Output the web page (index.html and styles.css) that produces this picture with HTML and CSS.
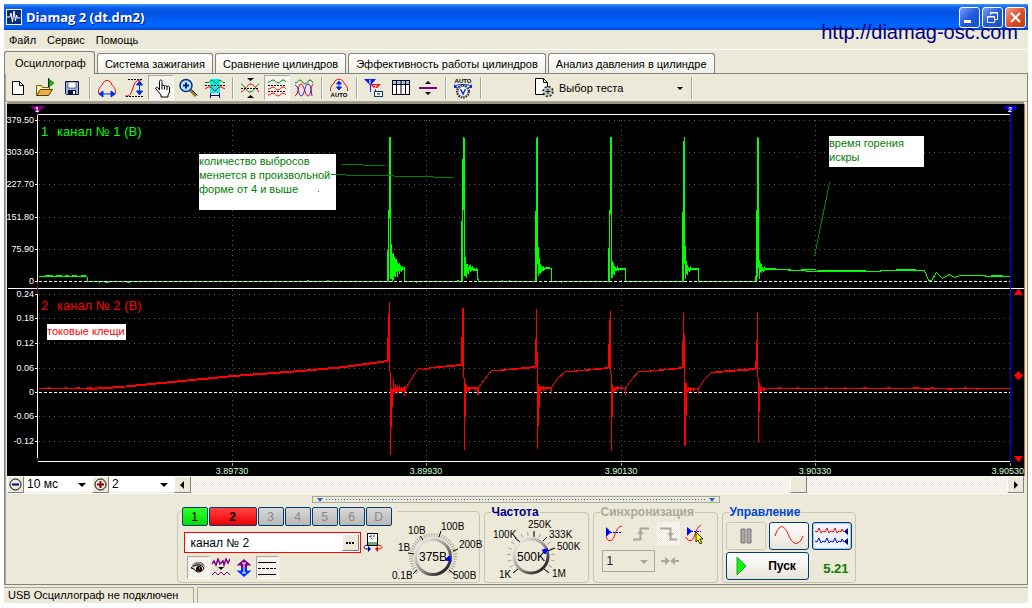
FILE: index.html
```html
<!DOCTYPE html>
<html lang="ru">
<head>
<meta charset="utf-8">
<title>Diamag 2 (dt.dm2)</title>
<link rel="stylesheet" href="styles.css">
</head>
<body>
<div class="window">
  <header class="titlebar">
    <svg class="app-icon" width="16" height="16" viewBox="0 0 16 16"><rect width="16" height="16" fill="#fff"/><rect x="1" y="1" width="14" height="14" fill="#0a2a7a"/><path d="M1 8h3l1-4 1.500 9 1.500-11 1.500 10 1-6 1 3h3" fill="none" stroke="#fff"/></svg>
    <h1 class="title">Diamag 2 (dt.dm2)</h1>
    <div class="window-buttons">
      <button class="wbtn" aria-label="Свернуть"><svg width="19" height="19" viewBox="0 0 19 19"><path d="M4 12h7v3H4z" fill="#fff"/></svg></button>
      <button class="wbtn" aria-label="Восстановить"><svg width="19" height="19" viewBox="0 0 19 19" fill="none" stroke="#fff"><path d="M7.500 7V4.500h7v7H12M7 5h8M4.500 8.500h7v6h-7zM4 9h8"/></svg></button>
      <button class="wbtn wbtn-close" aria-label="Закрыть"><svg width="19" height="19" viewBox="0 0 19 19"><path d="M5 5l9 9M14 5l-9 9" stroke="#fff" stroke-width="2"/></svg></button>
    </div>
  </header>
  <a class="site" href="#">http://diamag-osc.com</a>
  <nav class="menu">
    <button>Файл</button><button>Сервис</button><button>Помощь</button>
  </nav>
  <div class="tabs" role="tablist">
    <button class="tab tab-active" role="tab" aria-selected="true">Осциллограф</button>
    <button class="tab" role="tab">Система зажигания</button>
    <button class="tab" role="tab">Сравнение цилиндров</button>
    <button class="tab" role="tab">Эффективность работы цилиндров</button>
    <button class="tab" role="tab">Анализ давления в цилиндре</button>
  </div>
  <main class="page">
    <div class="toolbar">
      <button class="tool" aria-label="Новый"><svg width="20" height="20" viewBox="0 0 20 20"><path d="M4.500 3.500h7l4 4v9h-11zM11.500 3.500v4h4" fill="#fff" stroke="#000"/></svg></button>
      <button class="tool" aria-label="Открыть"><svg width="20" height="20" viewBox="0 0 20 20"><path d="M1.500 17V7.500h5l1 2h7V12" fill="#fff4b0" stroke="#7a5a10"/><path d="M1.500 17.500l4-6h12l-4 6z" fill="#e8b040" stroke="#5a3c00"/><path d="M13.500 0v9" stroke="#000"/><path d="M14 1l5 4-5 4z" fill="#00c000" stroke="#006000" stroke-width=".6"/></svg></button>
      <button class="tool" aria-label="Сохранить"><svg width="20" height="20" viewBox="0 0 20 20"><path d="M3.500 3.500h13v13h-12l-1-1z" fill="#9ab0e8" stroke="#101030"/><path d="M6 4h8v6H6z" fill="#fff" stroke="#223" stroke-width=".6"/><path d="M6 12h8v4H6z" fill="#101030"/><path d="M11 13h2v3h-2z" fill="#fff"/></svg></button>
      <span class="sep"></span>
      <button class="tool" aria-label="Масштаб по времени"><svg width="20" height="20" viewBox="0 0 20 20" fill="none"><path d="M1.500 16C1 11 3 9 5 7 7 1 13 1 15 7c2 2 4 4 3.500 9" stroke="red"/><path d="M3 16h14M6 13l-4 3 4 3zM14 13l4 3-4 3z" stroke="#0030e0" fill="#0030e0"/></svg></button>
      <button class="tool" aria-label="Масштаб по уровню"><svg width="20" height="20" viewBox="0 0 20 20" fill="none"><path d="M1 18h3c4-1 4-8 7-13 1-2 3-3 6-3" stroke="red"/><path d="M4 1.500h15M2 18.500h17" stroke="#000" stroke-dasharray="2 1"/><path d="M15.500 4v13M12.500 7l3-4 3 4zM12.500 13l3 4 3-4z" stroke="#0030e0" fill="#0030e0"/></svg></button>
      <button class="tool tool-on" aria-label="Рука"><svg width="20" height="20" viewBox="0 0 20 20"><path d="M8.500 12V3.500c0-2 2.500-2 2.500 0V8c0-1.500 2.500-1 2.500.5 0-1.500 2.500-1 2.500.5 0-1.300 2.500-1 2.500.8V14l-1.500 3v2h-7v-2l-5-6c-.8-1.600 1-2.300 2-1z" fill="#fff" stroke="#000"/><path d="M11 8v3.500M13.500 8.500v3M16 9v3" stroke="#000"/></svg></button>
      <button class="tool" aria-label="Лупа"><svg width="20" height="20" viewBox="0 0 20 20"><path d="M12 12l6 6" stroke="#a07830" stroke-width="3"/><path d="M13.500 11.500l6 6" stroke="#222"/><circle cx="8" cy="7.500" r="6" fill="#b8e0ff" stroke="#003080" stroke-width="1.500"/><path d="M8 4.500v6M5 7.500h6" stroke="#0020a0" stroke-width="2"/></svg></button>
      <button class="tool" aria-label="Интервал"><svg width="20" height="20" viewBox="0 0 20 20" fill="none"><path d="M5 1h10v14H5z" fill="#00f0f0"/><path d="M0 4.500h4l2-2h2l3 3 3-3h2l2 2h2" stroke="#008000"/><path d="M0 7.500h20" stroke="#000" stroke-dasharray="2 1"/><path d="M0 11l3-2h3l4 4 4-4h2l4 2" stroke="red"/><path d="M5 17.500h9M5.500 15v5M14.500 15v5" stroke="#0000a0"/></svg></button>
      <span class="sep"></span>
      <button class="tool" aria-label="Совместить"><svg width="20" height="20" viewBox="0 0 20 20" fill="none"><path d="M7 0h7l-3.500 3zM7 20h7l-3.500-3z" fill="#000"/><path d="M1 14c4-1 6-8 10-8 4 1 5 5 8 8" stroke="red"/><path d="M1 6c4 1 5 8 9 8s6-7 9-8" stroke="#008000"/><path d="M1 10.500h18" stroke="#000" stroke-dasharray="2 1"/></svg></button>
      <button class="tool tool-on" aria-label="Разделить"><svg width="20" height="20" viewBox="0 0 20 20" fill="none"><path d="M1 4c3 0 3-2 5-2s3 3 5 3 3-3 5-3 2 1 3 2" stroke="#008000"/><path d="M1 7.500h18M1 13.500h18" stroke="#000" stroke-dasharray="2 1"/><path d="M1 11c3 0 3-2 5-2s3 3 5 3 3-3 5-3 2 1 3 2M1 17c3 0 3-2 5-2s3 3 5 3 3-3 5-3 2 1 3 2" stroke="red"/></svg></button>
      <button class="tool" aria-label="Наложить"><svg width="20" height="20" viewBox="0 0 20 20" fill="none"><path d="M1 5c3 0 3-3 5-3s3 4 5 4 3-4 5-4 2 2 3 3" stroke="#008000"/><path d="M1 18C5 16 4 6 7 6s4 12 7 12 2-8 5-12" stroke="red"/><path d="M1 7c4 1 3 10 6 11 4 0 3-11 7-12 3 0 3 7 4 12" stroke="#2020f0"/></svg></button>
      <span class="sep"></span>
      <button class="tool" aria-label="Авто"><svg width="20" height="20" viewBox="0 0 20 20"><path d="M1.500 13C1 9 3 7 5 5 7 0 13 0 15 5c2 2 4 4 3.500 8" fill="none" stroke="red"/><path d="M10 4v7M7.500 6L10 3l2.500 3zM7.500 9l2.500 3 2.500-3z" stroke="#0030e0" fill="#0030e0"/><text class="pix" x="10" y="19" text-anchor="middle">AUTO</text></svg></button>
      <span class="sep"></span>
      <button class="tool" aria-label="Маркеры"><svg width="20" height="20" viewBox="0 0 20 20"><path d="M0 1h12L7 7v7H6V7z" fill="#0020f0"/><path d="M6 6h11l-5 5v8h-1v-8z" fill="#f01010"/><path d="M5 2.500l1-.5v4M9.500 7.500h3l-2 3h3" stroke="#fff" fill="none"/><rect x="10.500" y="13.500" width="8" height="5" fill="#fff" stroke="#003c74"/><path d="M13 16h3" stroke="#000"/></svg></button>
      <button class="tool" aria-label="Таблица"><svg width="20" height="20" viewBox="0 0 20 20"><rect x="1.500" y="2.500" width="17" height="14" fill="#fff" stroke="#000"/><path d="M2 3h16v3H2z" fill="#90c8f8"/><path d="M2 6.500h16M5.500 3v13M10 3v13M14.500 3v13" stroke="#000"/></svg></button>
      <button class="tool" aria-label="Линия"><svg width="20" height="20" viewBox="0 0 20 20"><path d="M1 9h18v2H1z" fill="#800080"/><path d="M7 6h6l-3-3zM7 14h6l-3 3z"/></svg></button>
      <span class="sep"></span>
      <button class="tool" aria-label="Автонастройка"><svg width="20" height="22" viewBox="0 0 20 22"><text class="pix" x="10" y="6" text-anchor="middle">AUTO</text><circle cx="10" cy="14.500" r="6" fill="#fff" stroke="#222" stroke-width="2" stroke-dasharray="1.500 1"/><circle cx="10" cy="14.500" r="5" fill="#fff" stroke="#777"/><path d="M7.500 12l2.500 5 2.500-5" fill="none" stroke="#0030f0" stroke-width="1.500"/><path d="M2 9c3-2 13-2 16 0" fill="none" stroke="#0030e0"/><path d="M1 7v4h4zM19 7v4h-4z" fill="#0030e0"/></svg></button>
      <span class="sep"></span>
      <label class="test-pick">
        <svg width="20" height="20" viewBox="0 0 20 20"><path d="M1.500.5h8l4 4v12h-12zM9.500.5v4h4" fill="#fff" stroke="#000"/><circle cx="14" cy="13.500" r="4.500" fill="#b8c8b8" stroke="#333" stroke-width="2.500" stroke-dasharray="2 1.500"/><circle cx="14" cy="13.500" r="4" fill="#b8c8b8"/><path d="M14 11v5M11.500 13.500h5" stroke="#222"/></svg>
        <span class="pick pick-flat"><select aria-label="Тест"><option>Выбор теста</option></select></span>
      </label>
      <span class="sep"></span>
    </div>

    <svg class="scope" viewBox="7 104 1017 372" role="img" aria-label="Осциллограмма">
      <rect x="7" y="104" width="1017" height="372"/>
      <g transform="translate(.5 .5)" fill="none" shape-rendering="crispEdges">
        <path class="grid" d="M38 120H1010M38 152H1010M38 184H1010M38 217H1010M38 249H1010M38 294H1010M38 318H1010M38 343H1010M38 368H1010M38 416H1010M38 441H1010"/>
        <path class="grid" d="M232 119V460M426 119V460M621 119V460M815 119V460"/>
        <path stroke="#fff" d="M37 114H1010M7 288H1024M37 461H1010M37 114V461"/>
        <path stroke="#fff" d="M34 120h3M34 152h3M34 184h3M34 217h3M34 249h3M34 281h3M34 294h3M34 318h3M34 343h3M34 368h3M34 392h3M34 416h3M34 441h3"/>
        <path stroke="#999" d="M232 462v3M426 462v3M621 462v3M815 462v3M1010 462v3"/>
        <path stroke="#800080" d="M37 106V114M37 281V293M37 457V461"/>
        <path stroke="#0f0" d="M38 276H86M44 275h8M55 275h6M64 275h4M71 275h5M80 275h5M87 276V281M87 281H387M98 282h1M104 282h4M126 282h3M306 280h2M326 280h2
          M387 249V281M388 209V281M389 136V217M390 136V278M391 243V278M392 253V281M393 252V279M394 256V275M395 258V276M396 258V271M397 261V276M398 263V270M399 262V273M400 264V270M401 266V271M402 265V269M403 267V269M404 266V281
          M404 281H461M415 282h1M456 280h2M461 220V281M462 158V281M463 136V209M464 137V275M465 256V275M466 263V277M467 263V272M468 266V273M469 264V269M470 264V271M471 266V270M472 265V269M473 267V270M474 267V270M475 268V270M476 267V270M477 268V279M478 278V281
          M478 281H535M501 280h1M508 280h1M535 210V281M536 137V281M537 136V263M538 246V275M539 257V272M540 263V273M541 265V271M542 266V270M543 265V270M544 267V269M541 268H551M544 267H549M551 268V281
          M551 281H608M560 282h1M608 247V281M609 209V281M610 136V213M611 136V277M612 260V277M613 262V273M614 265V274M615 266V270M616 267V270M617 265V269M618 267V270M614 268H625M618 269H625M625 268V281
          M625 281H682M682 211V281M683 140V281M684 136V263M685 245V278M686 260V273M687 264V274M688 266V270M689 267V271M690 265V270M691 267V269M688 268H698M688 269H698M698 268V281
          M698 281H755M755 275V281M756 209V281M757 136V276M758 137V267M759 259V278M760 262V271M761 263V272M762 266V270M763 267V271M764 265V270M765 267V269M762 268H775M762 269H790"/>
        <path stroke="#0f0" d="M780 269H788V270H806V271H840V271H880V270H924L928 280L931 280L936 272L942 278L949 274L954 277L960 275H985V276H1010M800 269h15M816 270h20M830 270H865M895 269H915M970 275h14M990 275h12"/>
        <path stroke="#fff" stroke-dasharray="3 2" d="M38 281H1010M38 392H1010"/>
        <path stroke="#f00" d="M38 388H86M46 387h3M64 387h2M75 387h4M86 387h5M86 389h2M86 388L120 386L233 375L300 370L344 366L387 360M90 389L120 387L233 376L300 371L344 367L387 361
          M387 337V361M388 313V360M389 301V371M390 371V454M391 387V426M392 388V406M393 378V391M394 388V393M395 383V392M396 386V391M397 385V392M398 387V390M399 384V391M400 387V391M401 386V390M402 387V391M403 386V390M392 388H405M404 385V395M405 386V391M405 388L410 380L418 368L424 369L430 367L461 364M424 368L461 365
          M461 336V365M462 307V365M463 307V377M464 377V449M465 382V416M466 384V391M467 386V390M468 388V391M469 386V390M466 387H478M466 388H478M475 386V390M477 388V394M478 387V394M478 387L484 379L491 370L496 370L535 366M500 370L535 367
          M535 338V366M536 308V366M537 351V448M538 383V425M539 385V406M540 386V392M541 385V389M543 385V390M540 387H551M540 388H551M545 387V390M551 387V393M551 387L557 378L565 371L570 371L608 367M572 371L608 368
          M608 343V367M609 319V367M610 310V373M611 373V450M612 383V416M613 386V391M614 387V391M615 386V390M617 385V390M612 388H625M614 387H622M625 386V394M625 388L631 379L638 371L645 371L682 367M645 371L682 368
          M682 340V367M683 311V367M684 333V445M685 382V445M686 382V414M687 387V392M688 386V391M690 386V391M687 388H698M688 389H694M693 387V390M698 387V393M698 388L704 379L711 372L718 371L755 368M715 372L755 369
          M755 360V368M756 340V368M757 311V377M758 377V441M759 382V411M760 386V391M761 385V391M763 386V390M764 387V390M760 388H1010M777 387h3M796 387h2M824 387h2M843 387h2M862 387h4M886 387h3M912 387h6M923 389h6M930 387h3M946 389h5M963 387h3M975 389h2"/>
        <path stroke="#008000" d="M340 164H362M362 165H384M335 174H345M345 175H353M353 175H393M393 176H433M433 177H453M829 182L814 256M318 190h1M795 156h1"/>
        <path stroke="#00f" d="M1010 106V461"/>
      </g>
      <path fill="#800080" d="M30 106h15l-7 7z"/>
      <path fill="#00f" d="M1003 106h15l-7 7z"/>
      <path fill="#f00" d="M1014 295l4-6h1l4 6zM1014 456h9l-4 6h-1zM1014 375.500l4.500-4.500 4.500 4.500-4.500 4.500z"/>
      <text class="mark" x="37" y="112" text-anchor="middle">1</text>
      <text class="mark" x="1010" y="112" text-anchor="middle">2</text>
      <g class="axis" text-anchor="end">
        <text x="34" y="123">379.50</text><text x="34" y="155">303.60</text><text x="34" y="187">227.70</text><text x="34" y="220">151.80</text><text x="34" y="252">75.90</text><text x="34" y="284">0</text>
        <text x="34" y="297">0.24</text><text x="34" y="321">0.18</text><text x="34" y="346">0.12</text><text x="34" y="371">0.06</text><text x="34" y="395">0</text><text x="34" y="419">-0.06</text><text x="34" y="444">-0.12</text>
      </g>
      <g class="time" text-anchor="middle">
        <text x="232" y="474">3.89730</text><text x="426" y="474">3.89930</text><text x="621" y="474">3.90130</text><text x="815" y="474">3.90330</text><text x="1024" y="474" text-anchor="end">3.90530</text>
      </g>
      <g class="channel" fill="#0f0"><text x="41" y="136">1</text><text x="57" y="136">канал № 1 (В)</text></g>
      <g class="channel" fill="#f00"><text x="41" y="310">2</text><text x="57" y="310">канал № 2 (В)</text></g>
      <path fill="#fff" d="M199 154h137v56H199zM829 136h95v31h-95zM47 324h79v16H47z"/>
      <path stroke="#008000" d="M331 174.500h5M318 191.500h1"/>
      <g class="note" fill="#008000"><text x="199" y="165">количество выбросов</text><text x="199" y="179">меняется в произвольной</text><text x="199" y="193">форме от 4 и выше</text><text x="829" y="147">время горения</text><text x="829" y="161">искры</text></g>
      <g class="note" fill="#f00"><text x="47" y="335">токовые клещи</text></g>
    </svg>

    <div class="scroll-row">
      <button class="mini" aria-label="Уменьшить"><svg width="13" height="13" viewBox="0 0 13 13"><circle cx="6.500" cy="6.500" r="5.500" fill="none" stroke="#000"/><path d="M3 5.500h7v2H3z" fill="#000090"/></svg></button>
      <span class="pick pick-scale"><select aria-label="Развёртка"><option>10 мс</option></select></span>
      <button class="mini" aria-label="Увеличить"><svg width="13" height="13" viewBox="0 0 13 13"><circle cx="6.500" cy="6.500" r="5.500" fill="none" stroke="#000"/><path d="M3 5.500h7v2H3zM5.500 3h2v7h-2z" fill="#900000"/></svg></button>
      <span class="pick pick-zoom"><select aria-label="Масштаб"><option>2</option></select></span>
      <button class="mini" aria-label="Влево"><svg width="9" height="9" viewBox="0 0 9 9"><path d="M6 1v8L2 5z"/></svg></button>
      <input class="scroll" type="range" min="0" max="1000" value="750" aria-label="Прокрутка">
      <button class="mini" aria-label="Вправо"><svg width="9" height="9" viewBox="0 0 9 9"><path d="M3 1v8l4-4z"/></svg></button>
    </div>

    <div class="splitter"><i class="tri"></i><span class="dots"></span><i class="tri"></i></div>

    <div class="panel">
      <fieldset class="group group-channel">
        <div class="left">
          <div class="channels">
            <button class="ch ch-green">1</button><button class="ch ch-red">2</button><button class="ch" disabled>3</button><button class="ch" disabled>4</button><button class="ch" disabled>5</button><button class="ch" disabled>6</button><button class="ch" disabled>D</button>
          </div>
          <div class="name-row">
            <div class="name-box"><input type="text" value="канал № 2" aria-label="Имя канала"><button class="more" aria-label="Выбрать"><svg width="9" height="4" viewBox="0 0 9 4"><path d="M0 1h2v2H0zM3 1h2v2H3zM6 1h2v2H6z"/></svg></button></div>
            <button class="plain" aria-label="Датчик"><svg width="20" height="20" viewBox="0 0 20 20"><rect x="4.500" y=".5" width="10" height="12" fill="#fff" stroke="#000"/><path d="M5 9h9v3H5z" fill="#70a870"/><path d="M6 3l4 4M7 3h6" stroke="#333" stroke-dasharray="2 1" fill="none"/><path d="M4 12c-4 1-4 4 0 4h2" fill="none" stroke="#000090"/><path d="M5 13v6l3-3z" fill="#000090"/><path d="M15 12c6 1 5 4 1 4h-2" fill="none" stroke="red"/><path d="M15 13v6l-3-3z" fill="red"/></svg></button>
          </div>
          <div class="view-row">
            <button class="tool2 tool-on" aria-label="Показать"><svg width="18" height="18" viewBox="0 0 18 18"><path d="M3 6c3-4 9-4 12-1l1 3c-4-2-8-2-11 1z" fill="#888"/><path d="M2 9c4-4 10-4 13 0-2 5-8 5-10 1z" fill="#f4d8c8" stroke="#000"/><circle cx="10" cy="10" r="3"/><path d="M8 12h2" stroke="red"/><path d="M10 9h1" stroke="#fff"/></svg></button>
            <button class="tool2" aria-label="Фильтр"><svg width="18" height="20" viewBox="0 0 18 20"><path d="M0 6l2-3 2 4 2-6 2 5 3-3 1 4 2-6 2 4 2-4" fill="none" stroke="#800080" stroke-width="1.500"/><path d="M6 9h6l-3 3z"/><path d="M0 17l3-3 3 3 3-3 3 3 3-3 3 3" fill="none" stroke="#800080"/></svg></button>
            <button class="tool2" aria-label="Сдвиг"><svg width="18" height="20" viewBox="0 0 18 20"><path d="M1.500 7.500L9 1l7.500 6.500H12V10H6V7.500z" fill="#800080"/><path d="M1.500 12.500L9 19l7.500-6.500H12V10H6v2.500z" fill="#0030ff"/><path d="M9 5v10M7 5h4M7 15h4" stroke="#fff"/></svg></button>
            <button class="tool2 tool-on" aria-label="Линии"><svg width="20" height="18" viewBox="0 0 20 18" stroke="#000"><path d="M1 3.500h18M1 15.500h18"/><path d="M1 9.500h18" stroke-dasharray="3 1"/></svg></button>
          </div>
        </div>
        <svg class="dial" width="96" height="66" viewBox="384 517 96 66" role="img" aria-label="Диапазон 375В">
          <defs><linearGradient id="ring" x1="0" y1="0" x2="1" y2="1"><stop offset="0" stop-color="#fff"/><stop offset=".5" stop-color="#999"/><stop offset="1" stop-color="#000"/></linearGradient></defs>
          <path d="M412.500 572.500a22 22 0 1 1 31 0" fill="none" stroke="#aaa79a" stroke-width="4" stroke-dasharray="1 1.500"/>
          <circle cx="428" cy="557" r="17.500" fill="#ece9d8" stroke="url(#ring)" stroke-width="3"/>
          <path d="M412 570l-4 4M409 554l-6-1M418 540l-3-4M434 537l2-6M448 551l5-2M444 570l5 4" stroke="#000"/>
          <path d="M440 560l4-4 2 5z" fill="#00f" stroke="#00f"/>
          <g class="ticks"><text x="387" y="579">0.1В</text><text x="393" y="551">1В</text><text x="403" y="534">10В</text><text x="436" y="530">100В</text><text x="454" y="548">200В</text><text x="448" y="579">500В</text></g>
          <text class="val" x="428" y="561" text-anchor="middle">375В</text>
        </svg>
      </fieldset>

      <fieldset class="group group-freq">
        <legend class="navy">Частота</legend>
        <svg class="dial" width="102" height="64" viewBox="485 519 102 64" role="img" aria-label="Частота 500K">
          <path d="M515.500 571.500a22 22 0 1 1 31 0" fill="none" stroke="#aaa79a" stroke-width="4" stroke-dasharray="1 5"/>
          <circle cx="531" cy="556" r="17" fill="#ece9d8" stroke="url(#ring)" stroke-width="3"/>
          <path d="M518 569l-5 4M520 542l-5-4M534 537v-6M543 541l4-4M548 551l7-3M544 569l5 4" stroke="#000"/>
          <path d="M542 550l6-1-3 5z" fill="#00f" stroke="#00f"/>
          <g class="ticks"><text x="499" y="578">1K</text><text x="493" y="538">100K</text><text x="528" y="528">250K</text><text x="549" y="538">333K</text><text x="557" y="550">500K</text><text x="552" y="577">1M</text></g>
          <text class="val" x="531" y="561" text-anchor="middle">500K</text>
        </svg>
      </fieldset>

      <fieldset class="group group-sync">
        <legend class="muted">Синхронизация</legend>
        <div class="sync-row">
          <button class="tool2" aria-label="Уровень"><svg width="20" height="20" viewBox="0 0 20 20"><path d="M2 13c2 5 6 5 8 0s3-10 8-11" fill="none" stroke="red"/><path d="M2 3v10l5-5z" fill="#00f"/><path d="M6 8.500h12" stroke="#00f" stroke-dasharray="2 1"/></svg></button>
          <button class="tool2" disabled aria-label="Фронт"><svg width="20" height="20" viewBox="0 0 20 20"><path d="M2 15.500h7.500v-11H18" fill="none" stroke="#aca899" stroke-width="2"/><path d="M6 10h7l-3.500-4z" fill="#aca899"/></svg></button>
          <button class="tool2 check" disabled aria-label="Спад"><svg width="20" height="20" viewBox="0 0 20 20"><path d="M2 4.500h10.500v11H19" fill="none" stroke="#aca899" stroke-width="2"/><path d="M9 9h7l-3.500 4z" fill="#aca899"/></svg></button>
          <button class="tool2" aria-label="Выбор уровня"><svg width="20" height="20" viewBox="0 0 20 20"><path d="M1 13c2 5 6 5 8 0s3-10 7-12" fill="none" stroke="red"/><path d="M2 3v9l5-5z" fill="#00f"/><path d="M6 7.500h10" stroke="#00f" stroke-dasharray="2 1"/><path d="M11 8v10l2-2 2 4 2-1-2-4h3z" fill="#ff0" stroke="#000" stroke-width=".8"/></svg></button>
        </div>
        <div class="sync-row">
          <span class="pick pick-sync"><select disabled aria-label="Канал синхронизации"><option>1</option></select></span>
          <svg width="20" height="12" viewBox="0 0 20 12"><path d="M1 5h4V2l5 4-5 4V7H1zM19 5h-4V2l-5 4 5 4V7h4z" fill="#aca899"/></svg>
        </div>
      </fieldset>

      <fieldset class="group group-run">
        <legend class="blue">Управление</legend>
        <div class="run-grid">
          <button class="big big-off" disabled aria-label="Пауза"><svg width="12" height="16" viewBox="0 0 12 16"><path d="M1 1h4v14H1zM7 1h4v14H7z" fill="#aaa" stroke="#777"/></svg></button>
          <button class="big" aria-label="Синус"><svg width="30" height="20" viewBox="0 0 30 20"><path d="M1 10C5-2 10-2 14 8s10 14 15 2" fill="none" stroke="red"/></svg></button>
          <button class="big big-blue" aria-label="Два канала"><svg width="34" height="20" viewBox="0 0 34 20"><path d="M0 5l2 1 2-4 2 5 2-2 2 1 2-4 2 5 2-2 2 1 2-4 2 5 2-2 2 1 1-3 2 3" fill="none" stroke="red"/><path d="M0 15l2 1 2-4 2 5 2-2 2 1 2-4 2 5 2-2 2 1 2-4 2 5 2-2 2 1 1-3 2 3" fill="none" stroke="#00f"/><path d="M33 2v7l-4-3.500zM33 12v7l-4-3.500z" fill="#000080"/></svg></button>
          <button class="big start"><svg width="12" height="20" viewBox="0 0 12 20"><path d="M1 1v18l9-9z" fill="#0f0" stroke="#393"/></svg><span>Пуск</span></button>
          <output class="reading">5.21</output>
        </div>
      </fieldset>
    </div>
  </main>
  <footer class="status">
    <span class="cell">USB Осциллограф не подключен</span><span class="cell cell-rest"></span>
  </footer>
</div>
</body>
</html>
```
FILE: styles.css
```css
* { box-sizing: border-box; }
body { margin: 0; padding: 4px; background: #fff; color: #000; font: 11px/14px "Liberation Sans", Arial, sans-serif; }
button, input, select { font: inherit; color: inherit; margin: 0; padding: 0; border: 0; background: none; border-radius: 0; }
svg { display: block; flex: none; }
.window { position: relative; background: #ece9d8; }

.titlebar { display: flex; align-items: center; height: 26px; padding: 0 2px; background: linear-gradient(#3d95ff 0, #0a5be6 4px, #0053e1 9px, #0061fc 18px, #0066ff 22px, #0045c8 26px); }
.title { margin: 0 0 0 4px; color: #fff; font: bold 13px/18px "Open Sans", "Noto Sans", sans-serif; text-shadow: 1px 1px #0a1883; flex: 1; }
.window-buttons { display: flex; gap: 2px; }
.wbtn { width: 21px; height: 21px; border: 1px solid #fff; border-radius: 3px; background: linear-gradient(135deg, #7f9ff0, #2459dc 50%, #1a4fc8); }
.wbtn-close { background: linear-gradient(135deg, #f0a088, #e0502c 50%, #c03a10); }
.site { position: absolute; top: 16px; right: 10px; color: #000080; font-size: 20px; line-height: 24px; text-decoration: none; }

.menu { display: flex; gap: 11px; height: 20px; padding: 0 5px; border-bottom: 1px solid #fff; }
.tabs { display: flex; align-items: flex-end; gap: 2px; height: 23px; }
.tab { height: 20px; padding: 0 7px; border: 1px solid #808080; border-bottom: 0; border-radius: 3px 3px 0 0; background: linear-gradient(#fff, #f0efe6); white-space: nowrap; }
.tab-active { height: 23px; margin-bottom: -1px; padding: 0 8px 0 10px; position: relative; z-index: 1; background: #ece9d8; }

.page { border: 1px solid #808080; box-shadow: inset 1px 0 #aca899; }
.toolbar { display: flex; align-items: center; gap: 1px; height: 28px; border-bottom: 1px solid #aca899; box-shadow: 0 1px #fff; }
.tool { display: grid; place-items: center; width: 26px; height: 25px; }
.tool-on { border: 1px solid; border-color: #aca899 #fff #fff #aca899; background: repeating-conic-gradient(#fff 0 25%, #ece9d8 0 50%) 0 0 / 2px 2px; }
.sep { width: 7px; height: 22px; background: linear-gradient(90deg, transparent 3px, #aca899 3px 4px, #fff 4px 5px, transparent 5px); }
.pix { font: bold 6px "Liberation Sans", sans-serif; }
.test-pick { display: flex; align-items: center; gap: 5px; width: 202px; padding-left: 49px; }
.pick { position: relative; display: block; }
.pick select { width: 100%; height: 100%; appearance: none; opacity: 1; }
.pick::after { content: ""; position: absolute; right: 6px; top: 50%; margin-top: -1px; border: solid transparent; border-width: 4px 4px 0; border-top-color: #000; pointer-events: none; }
.pick-flat { flex: 1; }
.test-pick .pick::after { right: 4px; border-width: 3px 3px 0; }

.scope { width: calc(100% - 5px); margin: 2px 3px 0 2px; box-shadow: 0 -2px #999588, 1px 0 #b07838; }
.grid { stroke: #5a5a5a; stroke-dasharray: 1 4; }
.axis, .time { font-size: 9px; fill: #fff; }
.time { fill: #d0ffd0; }
.mark { font: bold 7px "Liberation Sans", sans-serif; fill: #fff; }
.channel { font-size: 13px; }
.note { font-size: 11px; }

.scroll-row { display: flex; height: 18px; margin: 0 3px 0 2px; padding-bottom: 1px; border-bottom: 1px solid #fff; }
.mini { display: grid; place-items: center; width: 17px; height: 17px; background: #ece9d8; border: 1px solid; border-color: #fff #808080 #808080 #fff; }
.scroll-row .pick { background: #fff; }
.scroll-row select { padding-left: 3px; font-size: 12px; }
.pick-scale { width: 68px; }
.pick-zoom { width: 65px; }
.scroll { flex: 1; min-width: 0; appearance: none; height: 17px; background: repeating-conic-gradient(#fff 0 25%, #ece9d8 0 50%) 0 0 / 2px 2px; }
.scroll::-webkit-slider-thumb { appearance: none; width: 17px; height: 17px; background: #ece9d8; border: 1px solid; border-color: #fff #808080 #808080 #fff; }

.splitter { display: flex; align-items: center; gap: 3px; width: 408px; height: 7px; margin: 2px auto 0; padding: 0 4px; border: 1px solid #aca899; }
.tri { border: solid transparent; border-width: 4px 3px 0; border-top-color: #316ac5; }
.dots { flex: 1; height: 1px; background: repeating-linear-gradient(90deg, #316ac5 0 1px, transparent 1px 3px); }

.panel { display: flex; justify-content: center; align-items: flex-end; gap: 4px; height: 81px; padding-bottom: 1px; }
.group { margin: 0; padding: 0; min-width: 0; height: 78px; border: 1px solid #c8c5b4; border-radius: 4px; }
.group legend { margin-left: 6px; padding: 0 1px; font-weight: bold; font-size: 12px; line-height: 14px; }
.navy { color: #000080; }
.muted { color: #aca899; }
.blue { color: #0046d5; }
.group-channel { display: flex; width: 303px; height: 72px; }
.group-freq { width: 105px; }
.group-sync { width: 125px; }
.group-run { width: 134px; }
.left { display: flex; flex-direction: column; flex: 1; }
.channels { display: flex; gap: 1px; margin: -5px 0 6px 3px; padding: 0 5px 0 1px; align-self: flex-start; background: #ece9d8; }
.ch { width: 26px; height: 19px; border: 1px solid #003c74; border-radius: 2px; background: linear-gradient(#d8d8d8, #b8b8b8); font-size: 12px; color: #888; }
.ch-green { background: linear-gradient(#3f3, #0d0); color: #000; }
.ch-red { width: 48px; background: linear-gradient(#f44, #e00); color: #000; font-weight: bold; }
.name-row { display: flex; gap: 2px; padding-left: 6px; }
.name-box { display: flex; width: 177px; height: 21px; padding: 1px; border: 1px solid #f00; background: #fff; }
.name-box input { flex: 1; min-width: 0; padding-left: 5px; font-size: 12px; outline: 0; }
.more { display: grid; place-items: center; width: 17px; background: #ece9d8; border: 1px solid; border-color: #fff #808080 #808080 #fff; }
.view-row { display: flex; padding: 3px 0 0 9px; }
.tool2 { display: grid; place-items: center; width: 23px; height: 23px; }
.group-channel .dial { margin: 5px 0 0 -8px; }
.ticks { font-size: 10px; }
.val { font-size: 12px; }
.sync-row { display: flex; align-items: center; gap: 4px; padding: 3px 0 0 9px; }
.sync-row + .sync-row { padding-top: 5px; gap: 5px; padding-left: 8px; }
.check { background: repeating-conic-gradient(#fff 0 25%, #ece9d8 0 50%) 0 0 / 2px 2px; }
.pick-sync { width: 53px; height: 22px; border: 1px solid #aca899; }
.pick-sync select { padding-left: 4px; font-size: 12px; color: #222; }
.pick-sync::after { border-top-color: #aca899; }
.run-grid { display: grid; grid-template-columns: 40px 40px 40px; gap: 2px 3px; padding: 3px 0 0 3px; }
.big { display: grid; place-items: center; height: 28px; border: 1px solid #003c74; border-radius: 3px; background: linear-gradient(#fff, #e8e5da); }
.big-off { border-color: #c9c7ba; background: #ece9d8; }
.big-blue { background: #eef3fc; box-shadow: inset 0 0 0 1px #a8c4f0; }
.start { grid-column: span 2; grid-template-columns: 30px 1fr; font-weight: bold; font-size: 12px; }
.reading { align-self: center; justify-self: end; padding: 6px 3px 0 0; color: #008000; font: bold 13px/14px "Liberation Sans", sans-serif; }

.status { display: flex; gap: 3px; padding-top: 2px; height: 18px; }
.cell { width: 190px; padding-left: 4px; line-height: 15px; border: solid #aca899; border-width: 1px 1px 0 0; white-space: nowrap; }
.cell-rest { flex: 1; border-width: 1px 0 0 1px; }
```
